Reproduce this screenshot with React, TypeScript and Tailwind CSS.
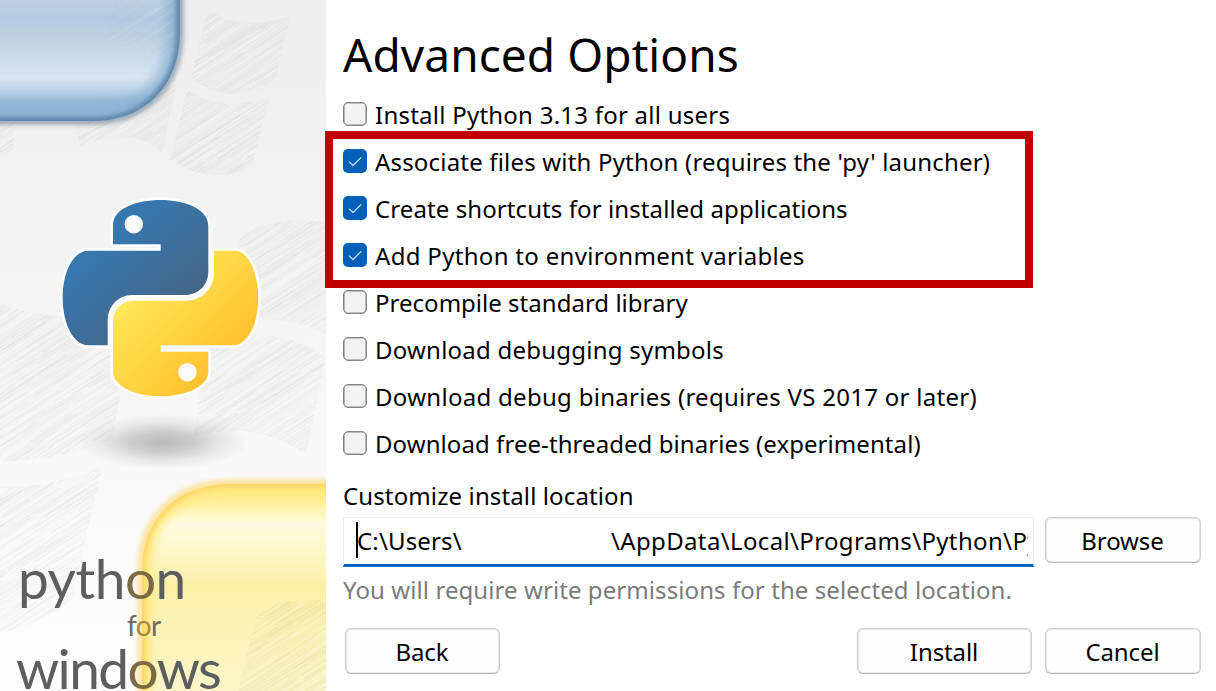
import type { ReactNode } from "react";

type Option = { label: string; checked: boolean; tracking: string };

const options: Option[] = [
  { label: "Install Python 3.13 for all users", checked: false, tracking: "tracking-[0.24px]" },
  { label: "Associate files with Python (requires the 'py' launcher)", checked: true, tracking: "tracking-[0.18px]" },
  { label: "Create shortcuts for installed applications", checked: true, tracking: "tracking-[0.09px]" },
  { label: "Add Python to environment variables", checked: true, tracking: "tracking-[0.31px]" },
  { label: "Precompile standard library", checked: false, tracking: "tracking-[0.02px]" },
  { label: "Download debugging symbols", checked: false, tracking: "tracking-[0.23px]" },
  { label: "Download debug binaries (requires VS 2017 or later)", checked: false, tracking: "tracking-[0.29px]" },
  { label: "Download free-threaded binaries (experimental)", checked: false, tracking: "tracking-[0.07px]" },
];

type Stroke = { x: number; y: number; len: number; white: boolean; alpha: number };

// Repeatable pseudo-random pencil strokes that shade the window panes.
function pencilStrokes(): Stroke[] {
  let seed = 7;
  const rnd = () => {
    seed = (seed * 16807) % 2147483647;
    return seed / 2147483647;
  };
  const list: Stroke[] = [];
  for (let y = -20; y < 780; y += 1.7) {
    let x = -390 + rnd() * 60;
    while (x < 300) {
      const len = 25 + rnd() * 75;
      list.push({ x, y: y + rnd() * 1.4, len, white: rnd() < 0.3, alpha: 0.008 + rnd() * 0.03 });
      x += len + rnd() * 12;
    }
  }
  return list;
}

const strokes = pencilStrokes();

function Hatching({ clip }: { clip: string }) {
  return (
    <g clipPath={`url(#${clip})`}>
      <rect width="326" height="691" fill="#000" opacity="0.012" />
      <g transform="rotate(-34)">
        {strokes.map((s, i) => (
          <path
            key={i}
            d={`M${s.x.toFixed(1)} ${s.y.toFixed(1)}l${s.len.toFixed(1)} ${(s.len * 0.02).toFixed(1)}`}
            stroke={s.white ? "#fff" : "#000"}
            strokeOpacity={s.white ? s.alpha * 8 : s.alpha}
            strokeWidth="1.3"
          />
        ))}
      </g>
    </g>
  );
}

function CheckBox({ checked }: { checked: boolean }) {
  if (!checked) {
    return (
      <span className="-mt-0.5 size-6 shrink-0 rounded-[5px] border border-[#858585] bg-[#f3f3f3] shadow-[inset_0_0_0_0.6px_#8a8a8a]" />
    );
  }
  return (
    <span className="-mt-0.5 flex size-6 shrink-0 items-center justify-center rounded-[5px] bg-[#005fb8]">
      <svg viewBox="0 0 24 24" className="size-6" fill="none" stroke="#c9def2" strokeWidth="1.3">
        <path d="M6 12.6 L10 16.5 L18.2 8.4" />
      </svg>
    </span>
  );
}

function Button({ className, children }: { className: string; children: ReactNode }) {
  return (
    <button
      className={
        "flex shrink-0 items-center justify-center rounded-[6px] border border-[#d0d0d0] border-b-[#b8b8b8] bg-[#fdfdfd] pr-px pt-[2px] leading-8 tracking-[-0.1px] shadow-[inset_0_0_0_0.6px_#d4d4d4] " +
        className
      }
    >
      {children}
    </button>
  );
}

function SideArt() {
  return (
    <svg viewBox="0 0 326 691" className="block h-[691px] w-[326px]">
      <defs>
        <linearGradient id="page" x1="0" y1="0" x2="0" y2="1">
          <stop offset="0" stopColor="#eeeeee" />
          <stop offset="0.5" stopColor="#f5f5f5" />
          <stop offset="1" stopColor="#fefefe" />
        </linearGradient>
        <linearGradient id="blueFill" gradientUnits="userSpaceOnUse" x1="0" y1="0" x2="0" y2="124">
          <stop offset="0" stopColor="#bfd0e0" />
          <stop offset="0.15" stopColor="#b3cae1" />
          <stop offset="0.3" stopColor="#bfd1e0" />
          <stop offset="0.45" stopColor="#cbdbe8" />
          <stop offset="0.63" stopColor="#d9e4f0" />
          <stop offset="0.72" stopColor="#bfd4e7" />
          <stop offset="0.82" stopColor="#95b8d7" />
          <stop offset="1" stopColor="#8fb3d2" />
        </linearGradient>
        <linearGradient id="yellowFill" gradientUnits="userSpaceOnUse" x1="0" y1="482" x2="0" y2="691">
          <stop offset="0" stopColor="#ffdc67" />
          <stop offset="0.1" stopColor="#fff09c" />
          <stop offset="0.2" stopColor="#fffbe1" />
          <stop offset="0.34" stopColor="#fdf6c6" />
          <stop offset="0.5" stopColor="#fbefa6" />
          <stop offset="0.7" stopColor="#fcf3b9" />
          <stop offset="1" stopColor="#fdf5c8" />
        </linearGradient>
        <linearGradient id="snakeBlue" gradientUnits="userSpaceOnUse" x1="80" y1="218" x2="178" y2="325">
          <stop offset="0" stopColor="#377ab5" />
          <stop offset="0.25" stopColor="#3877ae" />
          <stop offset="0.9" stopColor="#446687" />
        </linearGradient>
        <linearGradient id="snakeYellow" gradientUnits="userSpaceOnUse" x1="120" y1="290" x2="210" y2="375">
          <stop offset="0" stopColor="#ffe95c" />
          <stop offset="0.4" stopColor="#ffdb4b" />
          <stop offset="1" stopColor="#ffc12f" />
        </linearGradient>
        <radialGradient id="shadow">
          <stop offset="0" stopColor="#000" stopOpacity="0.25" />
          <stop offset="0.35" stopColor="#000" stopOpacity="0.18" />
          <stop offset="0.7" stopColor="#000" stopOpacity="0.06" />
          <stop offset="1" stopColor="#000" stopOpacity="0" />
        </radialGradient>
        <filter id="soft1" x="-20%" y="-20%" width="140%" height="140%">
          <feGaussianBlur stdDeviation="2.2" />
        </filter>
        <filter id="soft3" x="-20%" y="-20%" width="140%" height="140%">
          <feGaussianBlur stdDeviation="3.5" />
        </filter>
        <filter id="soft6" x="-30%" y="-30%" width="160%" height="160%">
          <feGaussianBlur stdDeviation="6" />
        </filter>
        <clipPath id="blueClip">
          <path d="M-20 -20H180V32C180 88 142 121 94 121H-20Z" />
        </clipPath>
        <clipPath id="yellowClip">
          <path d="M142 720V569C142 518 177 484 231 484H350V720Z" />
        </clipPath>
        <clipPath id="panes">
          <path d="M208 8Q243 34 291 15L275 82Q230 108 191 78Z" />
          <path d="M187 90Q225 115 270 96L252 165Q215 188 170 160Z" />
          <path d="M60 60H176V88L162 153Q135 125 80 146Z" />
          <path d="M0 110H17L13 150L0 156Z" />
          <path d="M240 238Q265 215 326 222V334Q298 319 262 320L215 350Z" />
          <path d="M204 352Q262 315 326 357L306 455Q258 420 194 436Z" />
          <path d="M0 303Q28 315 60 316L112 350L120 397L112 440Q60 460 0 462Z" />
          <path d="M0 487Q50 488 102 467L72 600Q33 627 0 633Z" />
        </clipPath>
        <clipPath id="yellowPane">
          <path d="M257 613Q283 597 326 600V691H238Z" />
        </clipPath>
        <clipPath id="bluePane">
          <path d="M114 0H174V60L105 45Z" />
        </clipPath>
      </defs>

      <rect width="326" height="691" fill="url(#page)" />
      <Hatching clip="panes" />

      <path d="M-20 -20H180V32C180 88 142 121 94 121H-20Z" fill="none" stroke="#6f8294" strokeOpacity="0.6" strokeWidth="8" filter="url(#soft1)" />
      <g clipPath="url(#blueClip)">
        <rect width="190" height="130" fill="url(#blueFill)" />
        <path d="M-40 -40H180V32C180 88 142 121 94 121H-40Z" fill="none" stroke="#8ab1d3" strokeOpacity="0.85" strokeWidth="26" filter="url(#soft6)" />
        <path d="M-40 -40H180V32C180 88 142 121 94 121H-40Z" fill="none" stroke="#5f87ac" strokeWidth="8" filter="url(#soft1)" />
        <g opacity="0.35">
          <Hatching clip="bluePane" />
        </g>
      </g>

      <path d="M142 720V569C142 518 177 484 231 484H350V720Z" fill="none" stroke="#ffdc8c" strokeOpacity="0.75" strokeWidth="10" filter="url(#soft1)" />
      <g clipPath="url(#yellowClip)">
        <rect x="138" y="480" width="190" height="215" fill="url(#yellowFill)" />
        <path d="M142 740V569C142 518 177 484 231 484H370V740Z" fill="none" stroke="#ffec83" strokeOpacity="0.85" strokeWidth="20" filter="url(#soft3)" />
        <path d="M142 740V569C142 518 177 484 231 484H370V740Z" fill="none" stroke="#ffd76c" strokeWidth="8" filter="url(#soft1)" />
      </g>
      <Hatching clip="yellowPane" />

      <ellipse cx="163" cy="442" rx="86" ry="28" fill="url(#shadow)" />

      <g transform="translate(40 180) scale(0.33333)">
        <g fill="#fdfdfd" stroke="#fdfdfd" strokeWidth="16" strokeLinejoin="round">
          <path d="M219 193V135C219 85 290 60 362 60C430 60 505 85 505 138V275C505 315 475 345 435 345H275C235 345 203 380 203 420V496H145C100 496 68 430 68 354C68 275 100 212 145 212H362V193Z" />
          <path d="M522 212H585C625 212 655 280 655 354C655 435 620 496 580 496H362V515H505V575C505 620 435 649 360 649C290 649 219 620 219 575V425C219 390 245 362 280 362H440C485 362 522 325 522 280Z" />
        </g>
      </g>
      <path
        d="M113 244.3V225C113 208.300 136.700 200 160.700 200C183.300 200 208.300 208.300 208.300 226V271.700C208.300 285 198.300 295 185 295H131.700C118.300 295 107.700 306.700 107.700 320V345.300H88.300C73.300 345.300 62.700 323.300 62.700 298C62.700 271.700 73.300 250.700 88.300 250.700H160.700V244.300Z"
        fill="url(#snakeBlue)"
      />
      <path
        d="M214 250.700H235C248.300 250.700 258.300 273.300 258.300 298C258.300 325 246.700 345.300 233.300 345.300H160.700V351.700H208.300V371.700C208.300 386.700 185 396.300 160 396.300C136.700 396.300 113 386.700 113 371.700V321.700C113 310 121.700 300.700 133.300 300.700H186.700C201.700 300.700 214 288.300 214 273.300Z"
        fill="url(#snakeYellow)"
      />
      <circle cx="133.800" cy="224.200" r="9.200" fill="#fafafa" />
      <circle cx="187.400" cy="372.300" r="9.200" fill="#fafafa" />
    </svg>
  );
}

function Sidebar() {
  return (
    <aside className="relative h-full w-[326px] shrink-0 overflow-hidden">
      <SideArt />
      <div className="absolute left-[18px] top-[549px] whitespace-nowrap font-[Lato] text-[55px] leading-[58px] tracking-[-0.5px] text-[#5c5e60]">
        pyth<span className="text-[#7a6a45]">o</span>n
      </div>
      <div className="absolute left-[127px] top-[611px] whitespace-nowrap font-[Lato] text-[28px] leading-7 tracking-[-0.6px] text-[#6c6c66]">
        f<span className="text-[#a58a45]">o</span>r
      </div>
      <div className="absolute left-[16px] top-[639px] whitespace-nowrap font-[Lato] text-[55px] leading-[58px] tracking-[-1.6px] text-[#5c5e60]">
        wind<span className="text-[#7a6a45]">o</span>ws
      </div>
    </aside>
  );
}

export default function App() {
  return (
    <div className="flex h-[691px] w-[1216px] overflow-hidden bg-white font-['Noto_Sans',sans-serif] text-[24px] text-black">
      <Sidebar />
      <main className="relative flex flex-1 flex-col pl-[17px] pr-[15px] pt-6">
        <h1 className="h-[60px] text-[46px] leading-[60px] tracking-[0.08px]">Advanced Options</h1>

        <div className="mt-[7px] flex flex-col">
          {options.map((o) => (
            <label key={o.label} className="flex h-[47px] items-center gap-[8px]">
              <CheckBox checked={o.checked} />
              <span className={"whitespace-nowrap leading-8 " + o.tracking}>{o.label}</span>
            </label>
          ))}
        </div>
        <div className="pointer-events-none absolute -left-px top-[131px] h-[157px] w-[708px] border-8 border-[#c00000]" />

        <div className="mt-[13px] h-8 leading-8 tracking-[0.12px]">Customize install location</div>
        <div className="mt-[5px] flex items-start justify-between">
          <div className="flex h-[50px] w-[691px] items-center border border-b-[3px] border-[#ececec] border-b-[#0063bf] bg-white pl-[12px] pr-[5px]">
            <span className="-mr-px -mt-[3px] h-[36px] w-[2px] shrink-0 bg-black" />
            <div className="flex min-w-0 flex-1 overflow-hidden whitespace-nowrap leading-8">
              <span className="w-[254px] shrink-0 tracking-[0.15px]">C:\Users\</span>
              <span className="tracking-[0.35px]">\AppData\Local\Programs\Python\Python313</span>
            </div>
          </div>
          <Button className="h-[46px] w-[156px]">Browse</Button>
        </div>

        <div className="mt-[7px] h-8 whitespace-nowrap leading-8 tracking-[0.08px] text-[#7b7b7b]">
          You will require write permissions for the selected location.
        </div>

        <div className="mt-[22px] flex">
          <Button className="ml-[2px] h-[46px] w-[155px]">Back</Button>
          <Button className="ml-auto h-[46px] w-[175px]">Install</Button>
          <Button className="ml-[13px] h-[46px] w-[156px]">Cancel</Button>
        </div>
      </main>
    </div>
  );
}
